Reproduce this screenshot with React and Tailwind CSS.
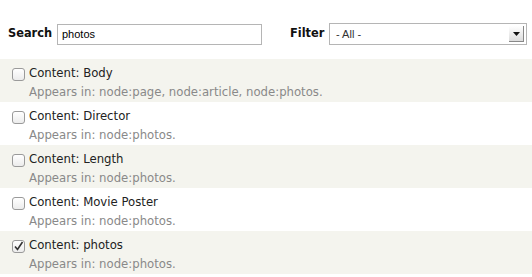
import React from "react";

const rows = [
  { name: "Content: Body", appears: "Appears in: node:page, node:article, node:photos.", checked: false },
  { name: "Content: Director", appears: "Appears in: node:photos.", checked: false },
  { name: "Content: Length", appears: "Appears in: node:photos.", checked: false },
  { name: "Content: Movie Poster", appears: "Appears in: node:photos.", checked: false },
  { name: "Content: photos", appears: "Appears in: node:photos.", checked: true },
];

function Box({ checked }) {
  return (
    <span className="w-[13px] h-[13px] rounded-[3px] border border-[#9a9a9a] bg-gradient-to-b from-white to-[#ececec] flex items-center justify-center shrink-0">
      {checked && (
        <svg width="11" height="11" viewBox="0 0 11 11">
          <path d="M2 5.5 L4.5 8.5 L9.5 1" fill="none" stroke="#333" strokeWidth="1.6" />
        </svg>
      )}
    </span>
  );
}

export default function App() {
  return (
    <div className="w-[532px] h-[277px] bg-white overflow-hidden text-[#222]" style={{ fontFamily: '"DejaVu Sans", sans-serif' }}>
      <div className="flex items-center h-[59px] pt-[9px] pl-[8px]">
        <span className="font-bold text-[11.4px] text-[#111] w-[43px]">Search</span>
        <div className="ml-[6px] w-[205px] h-[21px] border border-[#b5b5b5] flex items-center pl-[4px] text-[11px] text-black" style={{ fontFamily: '"Liberation Sans", sans-serif' }}>photos</div>
        <span className="ml-[28px] font-bold text-[11.4px] text-[#111] w-[33px]">Filter</span>
        <div className="ml-[6px] w-[198px] h-[22px] border border-[#b5b5b5] flex items-center pl-[6px] text-[11px] text-[#333] relative" style={{ fontFamily: '"Liberation Sans", sans-serif' }}>
          - All -
          <span className="absolute right-[2px] top-[2px] w-[15px] h-[16px] bg-gradient-to-b from-white to-[#dcdcdc] border-r border-b border-[#888] flex items-center justify-center">
            <svg width="7" height="4" viewBox="0 0 7 4"><path d="M0 0 H7 L3.5 4 Z" fill="#111" /></svg>
          </span>
        </div>
      </div>
      {rows.map((r, i) => (
        <div key={i} className={`h-[43px] pl-[12px] pt-[6px] ${i % 2 === 0 ? "bg-[#f4f4ee]" : "bg-white"}`}>
          <div className="flex items-center gap-[4px] h-[18px]">
            <Box checked={r.checked} />
            <span className="text-[11.7px] text-[#222]">{r.name}</span>
          </div>
          <div className="pl-[17px] text-[11.7px] text-[#898989] leading-[18px]">{r.appears}</div>
        </div>
      ))}
    </div>
  );
}
